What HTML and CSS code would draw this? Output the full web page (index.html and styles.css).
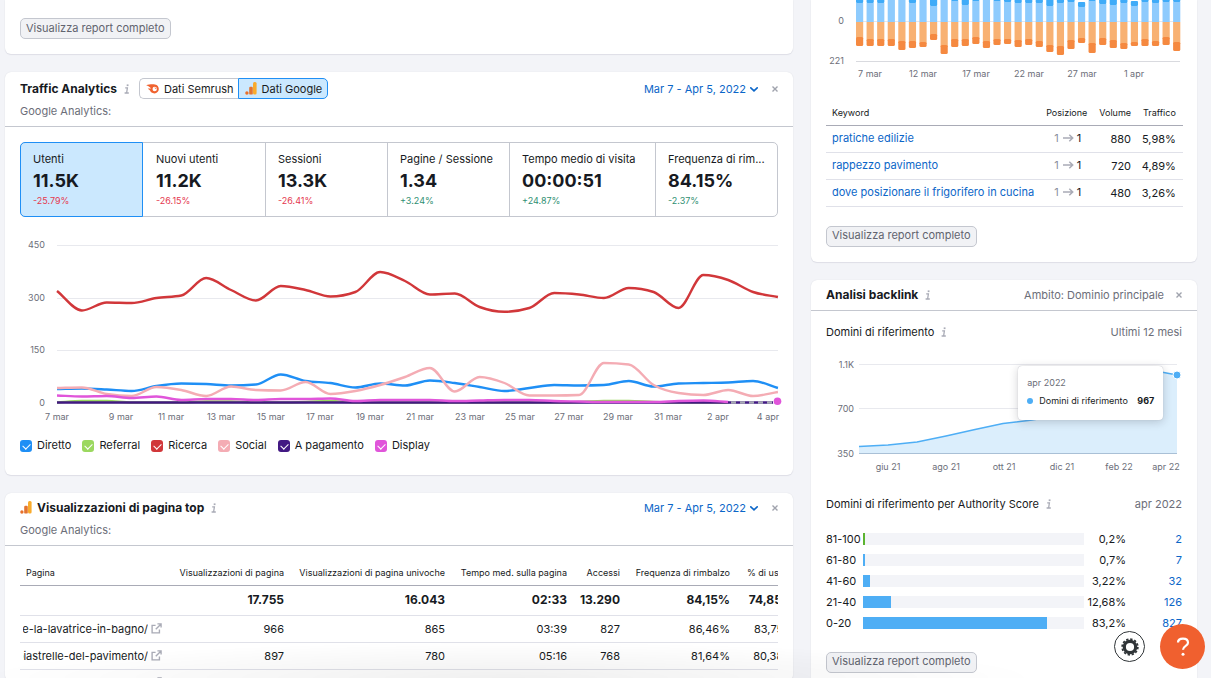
FILE: index.html
```html
<!DOCTYPE html>
<html lang="it">
<head>
<meta charset="utf-8">
<title>Dashboard</title>
<link rel="stylesheet" href="styles.css">
</head>
<body>
<svg class="defs" aria-hidden="true">
  <symbol id="info" viewBox="0 0 6 10"><path d="M1.2 3.8H3.4L2.6 9M.6 9H4.8" fill="none" stroke="currentColor" stroke-width="1.3"/><rect x="2.7" y=".4" width="1.8" height="1.7" fill="currentColor"/></symbol>
  <symbol id="close" viewBox="0 0 6 6"><path d="M.5 .5L5.5 5.5M5.5 .5L.5 5.5" stroke="currentColor" stroke-width="1.4"/></symbol>
  <symbol id="chevron" viewBox="0 0 8 5"><path d="M.8 .8L4 3.8L7.2 .8" fill="none" stroke="currentColor" stroke-width="1.6" stroke-linecap="round"/></symbol>
  <symbol id="ga" viewBox="0 0 12 13"><rect x="8" y="0" width="3.6" height="12.6" rx="1.5" fill="#f9ab2c"/><rect x="4.2" y="4.8" width="3.6" height="7.8" rx="1.2" fill="#e37430"/><circle cx="1.9" cy="11" r="1.7" fill="#e8702a"/></symbol>
  <symbol id="external" viewBox="0 0 12 12"><path d="M5 2.6H1.2V10.8H9.2V7.2M7 1H11V5M11 1L5.2 6.8" fill="none" stroke="currentColor" stroke-width="1.5"/></symbol>
  <symbol id="arrow" viewBox="0 0 11 8"><path d="M0 4H9.5M6.3 .8L9.7 4L6.3 7.2" fill="none" stroke="currentColor" stroke-width="1.5"/></symbol>
</svg>

<main class="board">
  <div class="column">
    <section class="card card-cut">
      <button class="report" type="button">Visualizza report completo</button>
    </section>

    <section class="card traffic">
      <header class="head head-tall">
        <div class="head-row">
          <h2>Traffic Analytics</h2>
          <svg class="info"><use href="#info"/></svg>
          <div class="segmented">
            <button type="button"><svg class="semrush" viewBox="0 0 13 10"><path d="M.2 1.3C3 .3 7 .1 9 .6C11.400 1.100 12.800 2.900 12.800 5.100C12.800 7.600 10.900 9.400 8.500 9.400C6 9.400 4.600 8 4.200 6.800C3.800 6 3 5.300 1.800 4.700C3 4.500 4 4.600 4.800 4.800C4.800 3.500 3 2.300 .2 1.300Z" fill="#f0622f"/><circle cx="8.700" cy="5" r="2.200" fill="#fff"/><path d="M8.700 3.800A1.200 1.200 0 0 1 9.900 5" fill="none" stroke="#f0622f" stroke-width=".8"/></svg>Dati Semrush</button>
            <button type="button" class="active"><svg class="ga"><use href="#ga"/></svg>Dati Google</button>
          </div>
          <button class="period" type="button">Mar 7 - Apr 5, 2022<svg class="chevron"><use href="#chevron"/></svg></button>
          <button class="close" type="button" aria-label="Chiudi"><svg><use href="#close"/></svg></button>
        </div>
        <p>Google Analytics:</p>
      </header>
      <div class="metrics">
        <button type="button" class="metric selected"><span>Utenti</span><strong>11.5K</strong><small class="down">-25.79%</small></button>
        <button type="button" class="metric"><span>Nuovi utenti</span><strong>11.2K</strong><small class="down">-26.15%</small></button>
        <button type="button" class="metric"><span>Sessioni</span><strong>13.3K</strong><small class="down">-26.41%</small></button>
        <button type="button" class="metric"><span>Pagine / Sessione</span><strong>1.34</strong><small class="up">+3.24%</small></button>
        <button type="button" class="metric"><span>Tempo medio di visita</span><strong>00:00:51</strong><small class="up">+24.87%</small></button>
        <button type="button" class="metric"><span>Frequenza di rim...</span><strong>84.15%</strong><small class="up">-2.37%</small></button>
      </div>
      <svg class="chart" viewBox="20 233 758 192" role="img" aria-label="Utenti per canale">
        <path class="grid-line" d="M57 245.5H778M57 298.5H778M57 350.5H778M57 403.5H778"/>
        <g class="tick end"><text x="45" y="248">450</text><text x="45" y="301">300</text><text x="45" y="353">150</text><text x="45" y="406">0</text></g>
        <g class="tick middle"><text x="57" y="420">7 mar</text><text x="121" y="420">9 mar</text><text x="171" y="420">11 mar</text><text x="221" y="420">13 mar</text><text x="271" y="420">15 mar</text><text x="320" y="420">17 mar</text><text x="370" y="420">19 mar</text><text x="420" y="420">21 mar</text><text x="470" y="420">23 mar</text><text x="520" y="420">25 mar</text><text x="569" y="420">27 mar</text><text x="618" y="420">29 mar</text><text x="668" y="420">31 mar</text><text x="718" y="420">2 apr</text><text x="768" y="420">4 apr</text></g>
        <g id="traffic-lines"></g>
        <path d="M728 402.5H773" stroke="#421983" stroke-width="2.4"/>
        <path d="M731 402.5H773" stroke="#a9abb6" stroke-width="2.4" stroke-dasharray="5 4"/>
        <circle cx="777.5" cy="401.3" r="3.8" fill="#e055da"/>
      </svg>
      <div class="legend">
        <label><input type="checkbox" class="c-diretto" checked>Diretto</label>
        <label><input type="checkbox" class="c-referral" checked>Referral</label>
        <label><input type="checkbox" class="c-ricerca" checked>Ricerca</label>
        <label><input type="checkbox" class="c-social" checked>Social</label>
        <label><input type="checkbox" class="c-pagamento" checked>A pagamento</label>
        <label><input type="checkbox" class="c-display" checked>Display</label>
      </div>
    </section>

    <section class="card">
      <header class="head head-top">
        <div class="head-row">
          <svg class="ga"><use href="#ga"/></svg>
          <h2>Visualizzazioni di pagina top</h2>
          <svg class="info"><use href="#info"/></svg>
          <button class="period" type="button">Mar 7 - Apr 5, 2022<svg class="chevron"><use href="#chevron"/></svg></button>
          <button class="close" type="button" aria-label="Chiudi"><svg><use href="#close"/></svg></button>
        </div>
        <p>Google Analytics:</p>
      </header>
      <div class="pages">
        <table>
          <colgroup><col class="w-page"><col class="w-views"><col class="w-unique"><col class="w-time"><col class="w-entries"><col class="w-bounce"><col class="w-exit"></colgroup>
          <thead><tr><th>Pagina</th><th>Visualizzazioni di pagina</th><th>Visualizzazioni di pagina univoche</th><th>Tempo med. sulla pagina</th><th>Accessi</th><th>Frequenza di rimbalzo</th><th>% di uscita</th></tr></thead>
          <tbody>
            <tr class="total"><td></td><td>17.755</td><td>16.043</td><td>02:33</td><td>13.290</td><td>84,15%</td><td>74,85%</td></tr>
            <tr><td><div class="path"><span class="clip"><span>re-la-lavatrice-in-bagno/</span></span><svg class="external"><use href="#external"/></svg></div></td><td>966</td><td>865</td><td>03:39</td><td>827</td><td>86,46%</td><td>83,75%</td></tr>
            <tr><td><div class="path"><span class="clip"><span>piastrelle-del-pavimento/</span></span><svg class="external"><use href="#external"/></svg></div></td><td>897</td><td>780</td><td>05:16</td><td>768</td><td>81,64%</td><td>80,38%</td></tr>
            <tr><td><div class="path"><span class="clip"></span><svg class="external"><use href="#external"/></svg></div></td><td></td><td></td><td></td><td></td><td></td><td></td></tr>
          </tbody>
        </table>
      </div>
    </section>
  </div>

  <div class="column">
    <section class="card card-cut keywords">
      <svg class="chart" viewBox="826 0 356 84" role="img" aria-label="Variazione delle keyword">
        <path d="M856 21.5H1180" stroke="#e6e7ec"/>
        <g id="keyword-bars"></g>
        <path d="M856 61.5H1180" stroke="#d9dadf"/>
        <g class="tick end"><text x="844" y="24">0</text><text x="844" y="64">221</text></g>
        <g class="tick middle"><text x="870" y="77">7 mar</text><text x="923" y="77">12 mar</text><text x="976" y="77">17 mar</text><text x="1029" y="77">22 mar</text><text x="1082" y="77">27 mar</text><text x="1134" y="77">1 apr</text></g>
      </svg>
      <table>
        <thead><tr><th>Keyword</th><th>Posizione</th><th>Volume</th><th>Traffico</th></tr></thead>
        <tbody>
          <tr><td><a href="#">pratiche edilizie</a></td><td>1 <svg class="arrow"><use href="#arrow"/></svg> <b>1</b></td><td>880</td><td>5,98%</td></tr>
          <tr><td><a href="#">rappezzo pavimento</a></td><td>1 <svg class="arrow"><use href="#arrow"/></svg> <b>1</b></td><td>720</td><td>4,89%</td></tr>
          <tr><td><a href="#">dove posizionare il frigorifero in cucina</a></td><td>1 <svg class="arrow"><use href="#arrow"/></svg> <b>1</b></td><td>480</td><td>3,26%</td></tr>
        </tbody>
      </table>
      <button class="report" type="button">Visualizza report completo</button>
    </section>

    <section class="card backlinks">
      <header class="head">
        <div class="head-row">
          <h2>Analisi backlink</h2>
          <svg class="info"><use href="#info"/></svg>
          <span class="scope">Ambito: Dominio principale</span>
          <button class="close" type="button" aria-label="Chiudi"><svg><use href="#close"/></svg></button>
        </div>
      </header>
      <div class="backlinks-body">
        <div class="subhead"><h3>Domini di riferimento</h3><svg class="info"><use href="#info"/></svg><span>Ultimi 12 mesi</span></div>
        <div class="area">
          <svg class="chart" viewBox="826 355 356 120" role="img" aria-label="Domini di riferimento negli ultimi 12 mesi">
            <path class="grid-line" d="M859 364.5H1177M859 408.5H1177"/>
            <path d="M859 446.5L888 445L917 442L946 436L975 429.5L1003 423.5L1032 420L1061 415L1090 400L1119 378L1148 369.5L1177 375V453.5H859Z" fill="#dbeefc"/>
            <path d="M859 446.5L888 445L917 442L946 436L975 429.5L1003 423.5L1032 420L1061 415L1090 400L1119 378L1148 369.5L1177 375" fill="none" stroke="#4eaef5" stroke-width="1.5"/>
            <path d="M859 453.5H1177" stroke="#a9c0d6"/>
            <circle cx="1177" cy="375" r="4" fill="#4eaef5" stroke="#fff"/>
            <g class="tick end"><text x="854" y="368">1.1K</text><text x="854" y="412">700</text><text x="854" y="457">350</text></g>
            <g class="tick middle"><text x="888" y="470">giu 21</text><text x="946" y="470">ago 21</text><text x="1004" y="470">ott 21</text><text x="1062" y="470">dic 21</text><text x="1119" y="470">feb 22</text><text x="1166" y="470">apr 22</text></g>
          </svg>
          <div class="tooltip"><p>apr 2022</p><div><i></i><span>Domini di riferimento</span><strong>967</strong></div></div>
        </div>
        <div class="subhead"><h3>Domini di riferimento per Authority Score</h3><svg class="info"><use href="#info"/></svg><span>apr 2022</span></div>
        <div class="scores">
          <div><span>81-100</span><div class="track"><div class="fill green" style="width:0.8%"></div></div><span>0,2%</span><a href="#">2</a></div>
          <div><span>61-80</span><div class="track"><div class="fill" style="width:0.8%"></div></div><span>0,7%</span><a href="#">7</a></div>
          <div><span>41-60</span><div class="track"><div class="fill" style="width:3.22%"></div></div><span>3,22%</span><a href="#">32</a></div>
          <div><span>21-40</span><div class="track"><div class="fill" style="width:12.68%"></div></div><span>12,68%</span><a href="#">126</a></div>
          <div><span>0-20</span><div class="track"><div class="fill" style="width:83.2%"></div></div><span>83,2%</span><a href="#">827</a></div>
        </div>
        <button class="report" type="button">Visualizza report completo</button>
      </div>
    </section>
  </div>
</main>

<div class="shade"></div>
<div class="floating">
  <button class="gear" type="button" aria-label="Impostazioni"><svg viewBox="0 0 18 18"><circle cx="9" cy="9" r="5.7" fill="none" stroke="#2f3437" stroke-width="3.2"/><circle cx="9" cy="9" r="7.8" fill="none" stroke="#2f3437" stroke-width="1.8" stroke-dasharray="2.3 1.784"/></svg></button>
  <button class="help" type="button" aria-label="Aiuto"><svg viewBox="0 0 14 20"><path d="M2 5.6C2 3 4.2 1.6 7 1.6S12 3.1 12 5.7C12 9 7 8.700 7 12.800" fill="none" stroke="#fff" stroke-width="2.2"/><circle cx="7" cy="17.2" r="1.5" fill="#fff"/></svg></button>
</div>
<script src="charts.js"></script>
</body>
</html>
```

FILE: styles.css
```css
* { box-sizing: border-box; }
body {
  margin: 0;
  height: 100vh;
  overflow: hidden;
  background: #f3f4f8;
  color: #171a22;
  font: 11px/16px Inter, "Liberation Sans", sans-serif;
}
button { font: inherit; color: inherit; background: none; border: 0; padding: 0; cursor: pointer; }
h2, h3, p { margin: 0; }
a { color: #0b66c8; text-decoration: none; }
svg { display: block; flex: none; }
.defs { position: absolute; width: 0; height: 0; }

.board {
  display: grid;
  grid-template-columns: minmax(0, 1fr) 386px;
  gap: 18px;
  padding: 0 14px 0 5px;
}
.column { display: flex; flex-direction: column; gap: 18px; min-width: 0; }
.card { background: #fff; border-radius: 6px; box-shadow: 0 0 1px #d3d5dd, 0 1px 1px #dfe0e7; }
.card-cut { border-radius: 0 0 6px 6px; padding: 18px 15px 15px; }
.report {
  display: block;
  height: 21px;
  padding: 0 5px 2px;
  border: 1px solid #c4c7cf;
  border-radius: 5px;
  background: #f1f2f5;
  color: #62646f;
  line-height: 16px;
}

.head { padding: 6px 15px 0; border-bottom: 1px solid #c4c7cf; height: 31px; }
.backlinks .head { padding-top: 5px; }
.head-tall { height: 55px; }
.head-top { height: 53px; padding-top: 4px; }
.head-row { display: flex; align-items: center; height: 21px; }
.head h2 { font-size: 12px; line-height: 18px; font-weight: 700; }
.head p { color: #6c6e79; line-height: 16px; padding-top: 4px; }
.info { width: 6px; height: 10px; margin-left: 7px; color: #a9abb6; }
.ga { width: 12px; height: 13px; }
.head-row > .ga { margin-right: 5px; }
.segmented { display: flex; height: 21px; margin-left: 9px; }
.segmented button { display: flex; align-items: center; gap: 5px; padding: 0 4px 0 6px; border: 1px solid #c4c7cf; border-right: 0; border-radius: 5px 0 0 5px; }
.segmented .active { padding: 0 5px 0 6px; border: 1px solid #1f8ff5; border-radius: 0 5px 5px 0; background: #cbe8fe; }
.semrush { width: 13px; height: 10px; }
.period, .scope { margin-left: auto; }
.period { display: flex; align-items: center; gap: 4px; color: #0b66c8; }
.scope { color: #6c6e79; }
.chevron { width: 8px; height: 5px; margin-top: 2px; }
.close { margin-left: 14px; color: #a0a3ad; }
.close svg { width: 6px; height: 6px; }
.backlinks .close { margin-left: 12px; }

.metrics { display: grid; grid-template-columns: 122fr 122fr 122fr 122fr 146fr 122fr; margin: 15px 15px 16px; border: 1px solid #c4c7cf; border-radius: 5px; height: 75px; }
.metric { display: flex; flex-direction: column; align-items: flex-start; min-width: 0; padding: 8px 11px 0 12px; border-left: 1px solid #c4c7cf; text-align: left; }
.metric.selected { margin: -1px 0 -1px -1px; padding: 8px 11px 0 12px; border: 1px solid #1f8ff5; border-radius: 5px 0 0 5px; background: #cbe8fe; }
.metric.selected + .metric { border-left: 0; padding-left: 13px; }
.metric span { max-width: 100%; white-space: nowrap; line-height: 16px; }
.metric strong { font-size: 18px; line-height: 28px; font-weight: 700; }
.metric small { font-size: 9px; line-height: 12px; }
.down { color: #e5384f; }
.up { color: #2f8f72; }

.chart { width: 100%; height: auto; }
.traffic .chart { width: auto; margin: 0 15px; overflow: visible; }
.grid-line { stroke: #e8e9ee; fill: none; }
.tick { font-size: 9px; fill: #6c6e79; }
.end { text-anchor: end; }
.middle { text-anchor: middle; }
.line { fill: none; stroke-width: 2.4; stroke-linecap: butt; }

.legend { display: flex; gap: 11px; padding: 12px 15px 22px; }
.legend label { display: flex; align-items: center; gap: 5px; }
.legend input { appearance: none; position: relative; width: 12px; height: 12px; margin: 2px 0 0; border-radius: 3px; }
.legend input:checked::after { content: ""; position: absolute; left: 3px; top: 3px; width: 6px; height: 4px; border: solid #fff; border-width: 0 0 1px 1px; transform: rotate(-45deg); }
.c-diretto { background: #1f8ff5; }
.c-referral { background: #9bd85f; }
.c-ricerca { background: #d1373a; }
.c-social { background: #f4acb4; }
.c-pagamento { background: #421983; }
.c-display { background: #e055da; }

table { border-collapse: collapse; width: 100%; }
th { font-size: 9px; font-weight: 400; text-align: right; white-space: nowrap; }
td { text-align: right; white-space: nowrap; }
th:first-child, td:first-child { text-align: left; }
.pages { margin: 15px 15px 0; overflow: hidden; height: 120px; }
.pages table { width: 782px; min-width: 100%; table-layout: fixed; }
.pages th { height: 24px; padding: 0 8px 0 0; border-bottom: 1px solid #a9abb6; }
.pages td { height: 27px; padding: 0 8px 0 0; border-bottom: 1px solid #e0e1e9; }
.pages th:first-child, .pages td:first-child { padding-left: 6px; }
.pages .total td { height: 30px; font-size: 12px; font-weight: 700; }
.w-page { width: 150px; } .w-views { width: 122px; } .w-unique { width: 161px; } .w-time { width: 122px; } .w-entries { width: 53px; } .w-bounce { width: 110px; } .w-exit { width: 64px; }
.path { display: flex; align-items: center; gap: 3px; margin-left: -3px; }
.clip { display: flex; justify-content: flex-end; width: 127px; overflow: hidden; }
.external { width: 11px; height: 11px; color: #a9abb6; }

.keywords { padding-top: 0; }
.keywords th { height: 24px; padding: 0 0 0 12px; border-bottom: 1px solid #a9abb6; }
.keywords table { margin-top: 17px; }
.keywords td { height: 27px; padding: 0; border-bottom: 1px solid #e0e1e9; }
.keywords th:first-child, .keywords td:first-child { padding-left: 6px; }
.keywords th:last-child, .keywords td:last-child { padding-right: 7px; }
.keywords td:nth-child(-n+2) { padding-bottom: 2px; }
.keywords td:nth-child(2) { color: #8a8e9b; padding-right: 6px; }
.keywords b { color: #171a22; font-weight: 400; }
.arrow { display: inline-block; width: 11px; height: 8px; margin-left: 1px; color: #a9abb6; }
.keywords .report { margin-top: 19px; }

.backlinks-body { padding: 13px 15px 15px; }
.subhead { display: flex; align-items: center; height: 17px; }
.subhead h3 { font-size: 11px; font-weight: 400; }
.subhead span { margin-left: auto; color: #6c6e79; }
.area { position: relative; margin: 14px 0 21px; }
.tooltip {
  position: absolute;
  left: 54%;
  top: 11px;
  width: 145px;
  height: 54px;
  padding: 9px 9px 0;
  border-radius: 4px;
  background: #fff;
  box-shadow: 0 0 1px #a9abb6, 0 2px 10px rgba(25, 27, 35, .2);
  font-size: 9px;
}
.tooltip p { color: #6c6e79; }
.tooltip div { display: flex; align-items: center; padding-top: 2px; }
.tooltip i { width: 6px; height: 6px; margin-right: 6px; border-radius: 50%; background: #4eaef5; }
.tooltip strong { margin-left: auto; }
.scores { display: grid; gap: 5px; margin: 18px 0 21px; }
.scores > div { display: grid; grid-template-columns: 37px 1fr 42px 56px; align-items: center; height: 16px; text-align: right; }
.scores > div > span:first-child { text-align: left; }
.track { height: 12px; background: #f3f4f8; }
.fill { height: 12px; background: #4eaef5; }
.fill.green { background: #5cb431; }

.shade { position: fixed; left: 0; right: 0; bottom: 0; height: 36px; background: radial-gradient(ellipse 44% 100% at 42% 100%, rgba(0, 0, 0, .06), rgba(0, 0, 0, 0)); pointer-events: none; }
.floating { position: fixed; right: 6px; bottom: 9px; display: flex; align-items: center; gap: 15px; }
.gear { display: grid; place-items: center; width: 31px; height: 31px; border: 1px solid #2f3437; border-radius: 50%; background: #fff; }
.gear svg { width: 18px; height: 18px; }
.help { display: grid; place-items: center; width: 45px; height: 45px; border-radius: 50%; background: #f0602f; }
.help svg { width: 14px; height: 20px; }
```

FILE: charts.js
```js
const NS = "http://www.w3.org/2000/svg";

function add(parent, name, attrs) {
  const el = document.createElementNS(NS, name);
  for (const key in attrs) el.setAttribute(key, attrs[key]);
  parent.appendChild(el);
}

// Monotone cubic curve through evenly spaced samples.
function curve(ys, x0, step) {
  const n = ys.length;
  const slope = ys.slice(1).map((y, i) => (y - ys[i]) / step);
  const m = ys.map((_, i) => {
    if (i === 0) return slope[0];
    if (i === n - 1) return slope[n - 2];
    const a = slope[i - 1], b = slope[i];
    if (a * b <= 0) return 0;
    return Math.sign(a) * Math.min(Math.abs(a), Math.abs(b), Math.abs(a + b) / 4) * 2;
  });
  let d = `M${x0} ${ys[0]}`;
  const h = step / 3;
  for (let i = 1; i < n; i++) {
    const xa = x0 + step * (i - 1), xb = x0 + step * i;
    d += `C${xa + h} ${ys[i - 1] + m[i - 1] * h} ${xb - h} ${ys[i] - m[i] * h} ${xb} ${ys[i]}`;
  }
  return d;
}

const series = [
  ["#1f8ff5", [389, 388.5, 389.5, 391, 386, 383.5, 384, 385.5, 384.5, 374.5, 381, 383, 387.5, 383.5, 385.5, 380.5, 383, 387, 391, 388, 385, 385.5, 385, 381, 386.5, 383.5, 383, 382.5, 381, 388]],
  ["#9bd85f", [402.5, 401, 401, 402.5, 402.5, 402.5, 401.5, 401.5, 402.5, 402.5, 402, 401, 402.5, 402.5, 402.5, 402.5, 402.5, 402.5, 402.5, 402.5, 402.5, 402, 401, 401, 402, 402.5, 402.5, 402.5]],
  ["#d1373a", [291, 310.5, 302.5, 303, 298, 295.5, 278, 290, 300.5, 286, 290, 296.5, 292, 272, 281, 294.5, 293.5, 307, 311.8, 308, 293, 294.5, 298, 288, 292, 308, 275, 280, 292, 297]],
  ["#f4acb4", [388, 387.5, 394, 396, 387, 390, 396, 386.5, 390, 390.5, 382, 394, 391, 385, 377, 368, 391.5, 377, 383, 395.5, 395.5, 395, 363, 364.5, 385, 393, 395, 390, 396, 392]],
  ["#421983", Array(28).fill(402.5)],
  ["#e055da", [395.5, 396.5, 396, 398, 396.5, 400, 399, 399, 400, 399, 399, 398.5, 401, 400, 400, 400, 401, 400.5, 400, 400, 401, 401.5, 402, 402, 402, 401, 400.5, 402]]
];
const lines = document.getElementById("traffic-lines");
for (const [stroke, ys] of series) add(lines, "path", { class: "line", stroke, d: curve(ys, 57, 24.86) });

// Each entry: end of the dark blue cap, start and end of the dark orange cap, optional top.
const bars = [[3, 37, 46], [3, 39, 46], [3, 39, 46], [0, 39, 46], [0, 41, 50], [3, 41, 48], [0, 42, 47], [6, 34, 40], [0, 45, 54], [1, 39, 47], [5, 39, 46], [1, 37, 44], [0, 41, 48], [1, 39, 45], [2, 39, 44], [3, 40, 47], [3, 39, 45], [3, 41, 47], [6, 45, 52], [3, 46, 55], [2, 40, 49], [7, 38, 43, 2], [1, 43, 53], [4, 38, 45], [5, 40, 48], [3, 43, 49], [6, 42, 46, 1], [2, 39, 46], [3, 41, 46], [2, 37, 45], [2, 42, 51]];
const group = document.getElementById("keyword-bars");
bars.forEach(([cap, a, b, top = -3], i) => {
  const x = 856 + i * 10.57, width = 7.2;
  add(group, "rect", { x, y: cap, width, height: 22 - cap, fill: "#8ecbfd" });
  if (cap) add(group, "rect", { x, y: top, width, height: cap - top, rx: 1, fill: "#3fabf8" });
  add(group, "rect", { x, y: 22, width, height: a - 20, fill: "#f8b172" });
  add(group, "rect", { x, y: a, width, height: b - a, rx: 1.5, fill: "#f58940" });
});
```
